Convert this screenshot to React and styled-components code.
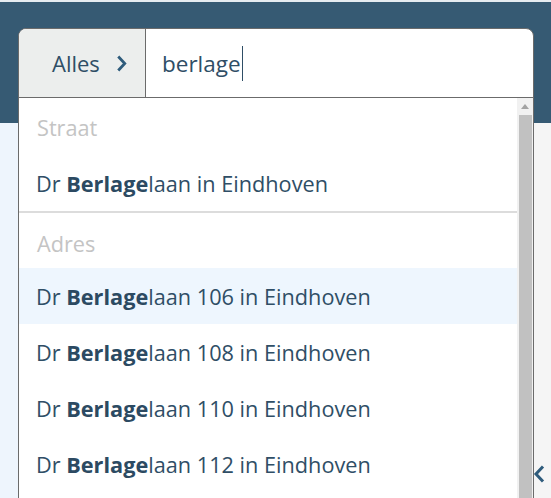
import React from "react";
import styled, { createGlobalStyle } from "styled-components";

const Global = createGlobalStyle`
  html, body { margin: 0; padding: 0; }
  body { width: 551px; height: 498px; overflow: hidden; font-family: "Open Sans", "Noto Sans", sans-serif; background: #eef5fd; }
  #root { height: 498px; }
`;

const Page = styled.div`
  position: relative;
  height: 498px;
  display: flex;
  flex-direction: column;
  border-top: 2px solid #e6ecf0;
  box-sizing: border-box;
  overflow: hidden;
`;

const TopBar = styled.div`
  height: 121px;
  background: #365a73;
  flex: none;
`;

const Main = styled.div`
  flex: 1;
  display: flex;
  background: #eef5fd;
`;

const Spacer = styled.div`
  flex: 1;
`;

const SidePanel = styled.div`
  width: 17px;
  background: #f5f5f5;
  display: flex;
  flex-direction: column;
  justify-content: flex-end;
  align-items: flex-start;
  padding-bottom: 14px;
  box-sizing: border-box;
`;

const Search = styled.div`
  position: absolute;
  left: 18px;
  top: 26px;
  width: 516px;
  bottom: -40px;
  display: flex;
  flex-direction: column;
  background: #fff;
  border: 1px solid #6b6b6b;
  border-radius: 8px 8px 0 0;
  box-sizing: border-box;
  overflow: hidden;
`;

const Bar = styled.div`
  height: 68px;
  display: flex;
  border-bottom: 1px solid #6b6b6b;
  flex: none;
`;

const Scope = styled.div`
  width: 127px;
  background: #eceeed;
  border-right: 1px solid #6b6b6b;
  display: flex;
  align-items: center;
  padding-left: 33px;
  gap: 15px;
  box-sizing: border-box;
  color: #2f4e66;
  font-size: 22px;
`;

const Query = styled.div`
  flex: 1;
  display: flex;
  align-items: center;
  padding-left: 16px;
  font-size: 22.5px;
  color: #2f4e66;
`;

const Caret = styled.span`
  display: inline-block;
  width: 1px;
  height: 35px;
  background: #2f4e66;
  margin-left: 1px;
`;

const Dropdown = styled.div`
  flex: 1;
  display: flex;
  min-height: 0;
`;

const List = styled.div`
  flex: 1;
  display: flex;
  flex-direction: column;
`;

const Heading = styled.div`
  height: ${(p) => p.$h}px;
  display: flex;
  align-items: flex-end;
  padding: 0 0 ${(p) => p.$pb}px 18px;
  box-sizing: border-box;
  font-size: 21.7px;
  color: #c4c4c4;
`;

const Item = styled.div`
  height: 56px;
  display: flex;
  align-items: center;
  padding-left: 17px;
  font-size: 21.7px;
  color: #2f4e66;
  background: ${(p) => (p.$active ? "#eef6fe" : "#fff")};
  flex: none;
`;

const Strong = styled.b`
  font-weight: 700;
  color: #2c4a62;
`;

const Separator = styled.div`
  height: 2px;
  background: #dcdcdc;
  flex: none;
`;

const ScrollTrack = styled.div`
  width: 16px;
  background: #f1f1f1;
  display: flex;
  flex-direction: column;
  align-items: center;
  flex: none;
`;

const ScrollArrow = styled.div`
  height: 17px;
  width: 100%;
  display: flex;
  align-items: center;
  justify-content: center;
`;

const Thumb = styled.div`
  width: 13px;
  flex: 1;
  background: #c1c1c1;
  margin-left: 1px;
`;

const ChevronBox = styled.div`
  display: flex;
  margin-left: ${(p) => p.$ml || 0}px;
`;

const Chevron = ({ dir = "right", w = 14, h = 20, ml }) => (
  <ChevronBox $ml={ml}>
    <svg width={w} height={h} viewBox="0 0 14 20">
      <path
        d={dir === "right" ? "M3.5 2.5 L10.5 10 L3.5 17.5" : "M11 2.5 L4 10 L11 17.5"}
        fill="none"
        stroke="#2f5c7c"
        strokeWidth="3"
      />
    </svg>
  </ChevronBox>
);

const Match = ({ rest }) => (
  <span>
    Dr <Strong>Berlage</Strong>
    {rest}
  </span>
);

export default function App() {
  const addresses = ["106", "108", "110", "112"];
  return (
    <>
      <Global />
      <Page>
        <TopBar />
        <Main>
          <Spacer />
          <SidePanel>
            <Chevron dir="left" ml={-2} />
          </SidePanel>
        </Main>
        <Search>
          <Bar>
            <Scope>
              <span>Alles</span>
              <Chevron dir="right" w={13} h={19} />
            </Scope>
            <Query>
              <span>berlage</span>
              <Caret />
            </Query>
          </Bar>
          <Dropdown>
            <List>
              <Heading $h={57} $pb={13}>Straat</Heading>
              <Item>
                <Match rest="laan in Eindhoven" />
              </Item>
              <Separator />
              <Heading $h={55} $pb={10}>Adres</Heading>
              {addresses.map((n, i) => (
                <Item key={n} $active={i === 0}>
                  <Match rest={`laan ${n} in Eindhoven`} />
                </Item>
              ))}
            </List>
            <ScrollTrack>
              <ScrollArrow>
                <svg width="8" height="5" viewBox="0 0 8 5">
                  <path d="M0 5 L4 0 L8 5 Z" fill="#a3a3a3" />
                </svg>
              </ScrollArrow>
              <Thumb />
            </ScrollTrack>
          </Dropdown>
        </Search>
      </Page>
    </>
  );
}
